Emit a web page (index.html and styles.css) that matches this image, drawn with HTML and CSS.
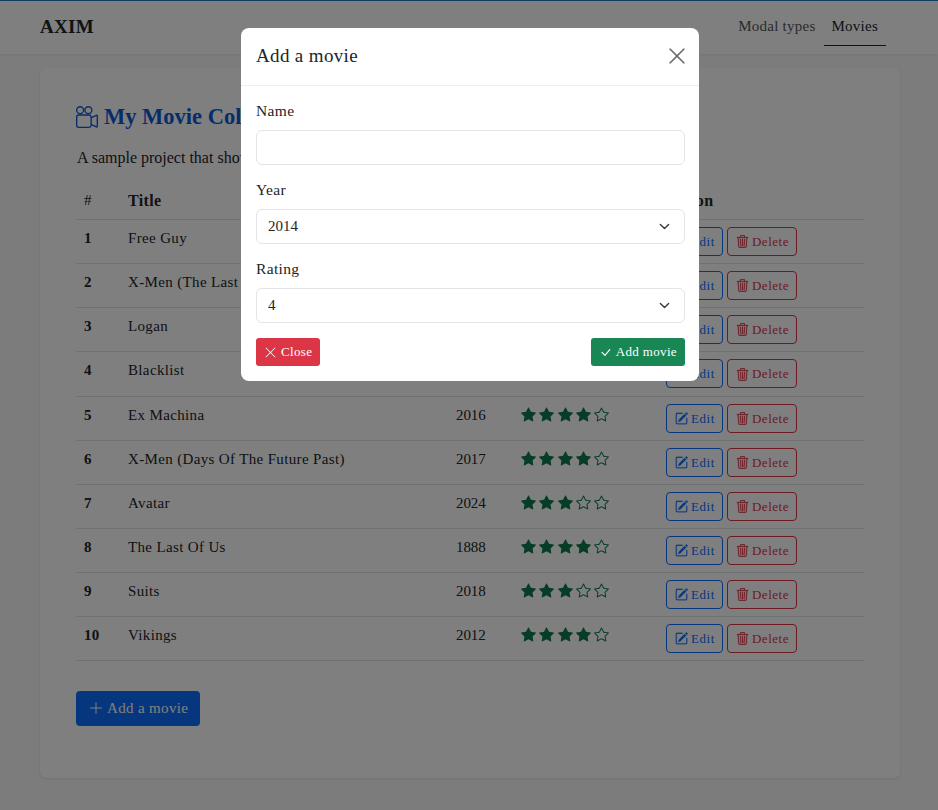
FILE: index.html
```html
<!DOCTYPE html>
<html lang="en">
<head>
    <meta charset="UTF-8">
    <meta name="viewport" content="width=device-width, initial-scale=1.0">
    <title>AXIM</title>
    <link rel="stylesheet" href="styles.css">
</head>
<body>
    <svg class="icon-defs" xmlns="http://www.w3.org/2000/svg">
        <symbol id="i-reels" viewBox="0 0 16 16"><path d="M6 3a3 3 0 1 1-6 0 3 3 0 0 1 6 0zM1 3a2 2 0 1 0 4 0 2 2 0 0 0-4 0z"/><path d="M9 6h.5a2 2 0 0 1 1.983 1.738l3.11-1.382A1 1 0 0 1 16 7.269v7.462a1 1 0 0 1-1.406.913l-3.111-1.382A2 2 0 0 1 9.5 16H2a2 2 0 0 1-2-2V8a2 2 0 0 1 2-2h7zm6 8.73V7.27l-3.5 1.555v4.35l3.5 1.556zM1 8v6a1 1 0 0 0 1 1h7.5a1 1 0 0 0 1-1V8a1 1 0 0 0-1-1H2a1 1 0 0 0-1 1z"/><path d="M9 6a3 3 0 1 0 0-6 3 3 0 0 0 0 6zM7 3a2 2 0 1 1 4 0 2 2 0 0 1-4 0z"/></symbol>
        <symbol id="i-edit" viewBox="0 0 16 16"><path d="M15.502 1.94a.5.5 0 0 1 0 .706L14.459 3.69l-2-2L13.502.646a.5.5 0 0 1 .707 0l1.293 1.293zm-1.75 2.456-2-2L4.939 9.21a.5.5 0 0 0-.121.196l-.805 2.414a.25.25 0 0 0 .316.316l2.414-.805a.5.5 0 0 0 .196-.12l6.813-6.814z"/><path fill-rule="evenodd" d="M1 13.5A1.5 1.5 0 0 0 2.5 15h11a1.5 1.5 0 0 0 1.5-1.5v-6a.5.5 0 0 0-1 0v6a.5.5 0 0 1-.5.5h-11a.5.5 0 0 1-.5-.5v-11a.5.5 0 0 1 .5-.5H9a.5.5 0 0 0 0-1H2.5A1.5 1.5 0 0 0 1 2.5v11z"/></symbol>
        <symbol id="i-trash" viewBox="0 0 16 16"><path d="M6.5 1h3a.5.5 0 0 1 .5.5v1H6v-1a.5.5 0 0 1 .5-.5ZM11 2.5v-1A1.5 1.5 0 0 0 9.5 0h-3A1.5 1.5 0 0 0 5 1.5v1H2.506a.58.58 0 0 0-.01 0H1.5a.5.5 0 0 0 0 1h.538l.853 10.66A2 2 0 0 0 4.885 16h6.23a2 2 0 0 0 1.994-1.84l.853-10.66h.538a.5.5 0 0 0 0-1h-.995a.59.59 0 0 0-.01 0H11Zm1.958 1-.846 10.58a1 1 0 0 1-.997.92h-6.23a1 1 0 0 1-.997-.92L3.042 3.5h9.916Zm-7.487 1a.5.5 0 0 1 .528.47l.5 8.5a.5.5 0 0 1-.998.06L5 5.03a.5.5 0 0 1 .47-.53Zm5.058 0a.5.5 0 0 1 .47.53l-.5 8.5a.5.5 0 1 1-.998-.06l.5-8.5a.5.5 0 0 1 .528-.47ZM8 4.5a.5.5 0 0 1 .5.5v8.5a.5.5 0 0 1-1 0V5a.5.5 0 0 1 .5-.5Z"/></symbol>
        <symbol id="i-star-fill" viewBox="0 0 16 16"><path d="M3.612 15.443c-.386.198-.824-.149-.746-.592l.83-4.73L.173 6.765c-.329-.314-.158-.888.283-.95l4.898-.696L7.538.792c.197-.39.73-.39.927 0l2.184 4.327 4.898.696c.441.062.612.636.282.95l-3.522 3.356.83 4.73c.078.443-.36.79-.746.592L8 13.187l-4.389 2.256z"/></symbol>
        <symbol id="i-star" viewBox="0 0 16 16"><path d="M2.866 14.85c-.078.444.36.791.746.593l4.39-2.256 4.389 2.256c.386.198.824-.149.746-.592l-.83-4.73 3.522-3.356c.33-.314.16-.888-.282-.95l-4.898-.696L8.465.792a.513.513 0 0 0-.927 0L5.354 5.12l-4.898.696c-.441.062-.612.636-.283.95l3.523 3.356-.83 4.73zm4.905-2.767-3.686 1.894.694-3.957a.565.565 0 0 0-.163-.505L1.71 6.745l4.052-.576a.525.525 0 0 0 .393-.288L8 2.223l1.847 3.658a.525.525 0 0 0 .393.288l4.052.575-2.906 2.77a.565.565 0 0 0-.163.506l.694 3.957-3.686-1.894a.503.503 0 0 0-.461 0z"/></symbol>
        <symbol id="i-x" viewBox="0 0 16 16"><path d="M2.146 2.854a.5.5 0 1 1 .708-.708L8 7.293l5.146-5.147a.5.5 0 0 1 .708.708L8.707 8l5.147 5.146a.5.5 0 0 1-.708.708L8 8.707l-5.146 5.147a.5.5 0 0 1-.708-.708L7.293 8 2.146 2.854Z"/></symbol>
        <symbol id="i-check" viewBox="0 0 16 16"><path d="M12.736 3.97a.733.733 0 0 1 1.047 0c.286.289.29.756.01 1.05L7.88 12.01a.733.733 0 0 1-1.065.02L3.217 8.384a.757.757 0 0 1 0-1.06.733.733 0 0 1 1.047 0l3.052 3.093 5.4-6.425a.247.247 0 0 1 .02-.022Z"/></symbol>
        <symbol id="i-plus" viewBox="0 0 16 16"><path d="M8 2a.5.5 0 0 1 .5.5v5h5a.5.5 0 0 1 0 1h-5v5a.5.5 0 0 1-1 0v-5h-5a.5.5 0 0 1 0-1h5v-5A.5.5 0 0 1 8 2Z"/></symbol>
    </svg>

    <nav class="navbar">
        <a class="brand" href="#">AXIM</a>
        <div class="nav-links">
            <a class="nav-link" href="#">Modal types</a>
            <a class="nav-link active" href="#">Movies</a>
        </div>
    </nav>

    <main class="card">
        <h1 class="page-title"><svg class="title-icon"><use href="#i-reels"/></svg>My Movie Collection</h1>
        <p class="lead">A sample project that shows how to use modals in a page.</p>

        <table class="movies">
            <thead>
                <tr><th class="col-num">#</th><th class="col-title">Title</th><th class="col-year">Year</th><th class="col-rating">Rating</th><th class="col-action">Action</th></tr>
            </thead>
            <tbody>
                <tr><td class="num">1</td><td>Free Guy</td><td class="year">2021</td><td><span class="stars"><svg><use href="#i-star-fill"/></svg><svg><use href="#i-star-fill"/></svg><svg><use href="#i-star-fill"/></svg><svg><use href="#i-star-fill"/></svg><svg><use href="#i-star"/></svg></span></td><td class="actions"><a class="btn-line edit" href="#"><svg><use href="#i-edit"/></svg>Edit</a><a class="btn-line delete" href="#"><svg><use href="#i-trash"/></svg>Delete</a></td></tr>
                <tr><td class="num">2</td><td>X-Men (The Last Stand)</td><td class="year">2006</td><td><span class="stars"><svg><use href="#i-star-fill"/></svg><svg><use href="#i-star-fill"/></svg><svg><use href="#i-star-fill"/></svg><svg><use href="#i-star"/></svg><svg><use href="#i-star"/></svg></span></td><td class="actions"><a class="btn-line edit" href="#"><svg><use href="#i-edit"/></svg>Edit</a><a class="btn-line delete" href="#"><svg><use href="#i-trash"/></svg>Delete</a></td></tr>
                <tr><td class="num">3</td><td>Logan</td><td class="year">2017</td><td><span class="stars"><svg><use href="#i-star-fill"/></svg><svg><use href="#i-star-fill"/></svg><svg><use href="#i-star-fill"/></svg><svg><use href="#i-star-fill"/></svg><svg><use href="#i-star"/></svg></span></td><td class="actions"><a class="btn-line edit" href="#"><svg><use href="#i-edit"/></svg>Edit</a><a class="btn-line delete" href="#"><svg><use href="#i-trash"/></svg>Delete</a></td></tr>
                <tr><td class="num">4</td><td>Blacklist</td><td class="year">2013</td><td><span class="stars"><svg><use href="#i-star-fill"/></svg><svg><use href="#i-star-fill"/></svg><svg><use href="#i-star-fill"/></svg><svg><use href="#i-star-fill"/></svg><svg><use href="#i-star"/></svg></span></td><td class="actions"><a class="btn-line edit" href="#"><svg><use href="#i-edit"/></svg>Edit</a><a class="btn-line delete" href="#"><svg><use href="#i-trash"/></svg>Delete</a></td></tr>
                <tr><td class="num">5</td><td>Ex Machina</td><td class="year">2016</td><td><span class="stars"><svg><use href="#i-star-fill"/></svg><svg><use href="#i-star-fill"/></svg><svg><use href="#i-star-fill"/></svg><svg><use href="#i-star-fill"/></svg><svg><use href="#i-star"/></svg></span></td><td class="actions"><a class="btn-line edit" href="#"><svg><use href="#i-edit"/></svg>Edit</a><a class="btn-line delete" href="#"><svg><use href="#i-trash"/></svg>Delete</a></td></tr>
                <tr><td class="num">6</td><td>X-Men (Days Of The Future Past)</td><td class="year">2017</td><td><span class="stars"><svg><use href="#i-star-fill"/></svg><svg><use href="#i-star-fill"/></svg><svg><use href="#i-star-fill"/></svg><svg><use href="#i-star-fill"/></svg><svg><use href="#i-star"/></svg></span></td><td class="actions"><a class="btn-line edit" href="#"><svg><use href="#i-edit"/></svg>Edit</a><a class="btn-line delete" href="#"><svg><use href="#i-trash"/></svg>Delete</a></td></tr>
                <tr><td class="num">7</td><td>Avatar</td><td class="year">2024</td><td><span class="stars"><svg><use href="#i-star-fill"/></svg><svg><use href="#i-star-fill"/></svg><svg><use href="#i-star-fill"/></svg><svg><use href="#i-star"/></svg><svg><use href="#i-star"/></svg></span></td><td class="actions"><a class="btn-line edit" href="#"><svg><use href="#i-edit"/></svg>Edit</a><a class="btn-line delete" href="#"><svg><use href="#i-trash"/></svg>Delete</a></td></tr>
                <tr><td class="num">8</td><td>The Last Of Us</td><td class="year">1888</td><td><span class="stars"><svg><use href="#i-star-fill"/></svg><svg><use href="#i-star-fill"/></svg><svg><use href="#i-star-fill"/></svg><svg><use href="#i-star-fill"/></svg><svg><use href="#i-star"/></svg></span></td><td class="actions"><a class="btn-line edit" href="#"><svg><use href="#i-edit"/></svg>Edit</a><a class="btn-line delete" href="#"><svg><use href="#i-trash"/></svg>Delete</a></td></tr>
                <tr><td class="num">9</td><td>Suits</td><td class="year">2018</td><td><span class="stars"><svg><use href="#i-star-fill"/></svg><svg><use href="#i-star-fill"/></svg><svg><use href="#i-star-fill"/></svg><svg><use href="#i-star"/></svg><svg><use href="#i-star"/></svg></span></td><td class="actions"><a class="btn-line edit" href="#"><svg><use href="#i-edit"/></svg>Edit</a><a class="btn-line delete" href="#"><svg><use href="#i-trash"/></svg>Delete</a></td></tr>
                <tr><td class="num">10</td><td>Vikings</td><td class="year">2012</td><td><span class="stars"><svg><use href="#i-star-fill"/></svg><svg><use href="#i-star-fill"/></svg><svg><use href="#i-star-fill"/></svg><svg><use href="#i-star-fill"/></svg><svg><use href="#i-star"/></svg></span></td><td class="actions"><a class="btn-line edit" href="#"><svg><use href="#i-edit"/></svg>Edit</a><a class="btn-line delete" href="#"><svg><use href="#i-trash"/></svg>Delete</a></td></tr>
            </tbody>
        </table>

        <a class="btn-add" href="#"><svg><use href="#i-plus"/></svg>Add a movie</a>
    </main>

    <div class="backdrop">
        <div class="modal">
            <div class="modal-header">
                <h2 class="modal-title">Add a movie</h2>
                <svg class="modal-close"><use href="#i-x"/></svg>
            </div>
            <form class="modal-body">
                <label class="field-label" for="name">Name</label>
                <input class="field" type="text" id="name" name="name">
                <label class="field-label" for="year">Year</label>
                <select class="field select" id="year" name="year"><option>2014</option></select>
                <label class="field-label" for="rating">Rating</label>
                <select class="field select" id="rating" name="rating"><option>4</option></select>
                <div class="modal-actions">
                    <button class="btn btn-close" type="button"><svg><use href="#i-x"/></svg>Close</button>
                    <button class="btn btn-save" type="submit"><svg><use href="#i-check"/></svg>Add movie</button>
                </div>
            </form>
        </div>
    </div>
</body>
</html>
```
FILE: styles.css
```css
* {
    box-sizing: border-box;
}
html, body {
    height: 810px;
    overflow: hidden;
}
body {
    margin: 0;
    background-color: #f8f9fa;
    color: #212529;
    font-family: "Liberation Serif", serif;
    font-size: 16px;
    letter-spacing: 0.35px;
}
a {
    text-decoration: none;
}
.icon-defs {
    display: none;
}

/* navbar */
.navbar {
    display: flex;
    justify-content: space-between;
    align-items: flex-start;
    height: 54px;
    padding: 0 52px 0 40px;
    background-color: #fff;
    border-top: 1px solid #1a7fbf;
    box-shadow: 0 1px 3px rgba(0, 0, 0, 0.08);
}
.brand {
    margin-top: 15px;
    color: #212529;
    font-size: 19px;
    font-weight: bold;
    letter-spacing: 0.3px;
}
.nav-links {
    display: flex;
}
.nav-link {
    height: 45px;
    padding: 17px 8px 0;
    color: #555;
    font-size: 15px;
    letter-spacing: 0.25px;
}
.nav-link.active {
    color: #212529;
    border-bottom: 1px solid #212529;
}

/* main card */
.card {
    height: 710px;
    margin: 14px 38px 0 40px;
    padding: 35px 36px 0;
    background-color: #fff;
    border-radius: 6px;
    box-shadow: 0 1px 3px rgba(0, 0, 0, 0.1);
}
.page-title {
    display: flex;
    align-items: center;
    margin: 0;
    height: 28px;
    color: #0d5bd7;
    font-size: 22.5px;
    font-weight: bold;
    letter-spacing: 0;
}
.title-icon {
    width: 22px;
    height: 22px;
    margin-right: 6px;
    fill: currentColor;
}
.lead {
    margin: 15px 0 0 1px;
    line-height: 24px;
    letter-spacing: 0;
}

/* table */
.movies {
    width: 788px;
    margin-top: 11px;
    border-collapse: collapse;
    table-layout: fixed;
    font-size: 15px;
}
.movies th {
    height: 38px;
    padding: 2px 8px 0;
    font-size: 16px;
    text-align: left;
    border-bottom: 1px solid #dee2e6;
}
.movies td {
    height: 44px;
    padding: 0 8px 6px;
    border-bottom: 1px solid #dee2e6;
}
.movies tbody tr:nth-child(4) td {
    height: 45px;
}
.movies th.col-num {
    width: 44px;
    font-size: 15px;
    font-weight: normal;
}
.col-title {
    width: 328px;
}
.col-year {
    width: 65px;
}
.col-rating {
    width: 145px;
}
.movies td.num {
    font-weight: bold;
}
.movies td.year {
    letter-spacing: -0.1px;
}
.stars {
    display: flex;
    gap: 3.3px;
    margin-top: -2px;
}
.stars svg {
    width: 15px;
    height: 15px;
    fill: #0f7b4f;
}
.movies td.actions {
    padding-top: 0;
    padding-bottom: 0;
    white-space: nowrap;
}

/* buttons */
.btn-line {
    display: inline-flex;
    align-items: center;
    height: 29px;
    margin-right: 4px;
    padding: 1px 7px 0 8px;
    border: 1px solid;
    border-radius: 4px;
    font-size: 13px;
    letter-spacing: 0.55px;
}
.btn-line svg {
    width: 13px;
    height: 13px;
    margin-right: 3px;
    fill: currentColor;
    stroke: currentColor;
    stroke-width: 0.3;
}
.btn-line.edit {
    color: #0d6efd;
}
.btn-line.delete {
    color: #dc3545;
}
.btn-add {
    display: inline-flex;
    align-items: center;
    height: 35px;
    margin-top: 30px;
    padding: 0 12px;
    background-color: #0d6efd;
    color: #fff;
    border-radius: 4px;
    font-size: 15px;
}
.btn-add svg {
    width: 16px;
    height: 16px;
    margin-right: 3px;
    fill: currentColor;
}

/* modal */
.backdrop {
    position: fixed;
    top: 0;
    left: 0;
    width: 100%;
    height: 100%;
    display: flex;
    justify-content: center;
    align-items: flex-start;
    padding: 28px 0 0 2px;
    background-color: rgba(0, 0, 0, 0.5);
}
.modal {
    width: 458px;
    background-color: #fff;
    border-radius: 8px;
}
.modal-header {
    display: flex;
    justify-content: space-between;
    align-items: center;
    height: 58px;
    padding: 0 12px 2px 15px;
    border-bottom: 1px solid #eee;
}
.modal-title {
    margin: 0;
    font-size: 19px;
    font-weight: normal;
}
.modal-close {
    width: 20px;
    height: 20px;
    fill: #6e6e6e;
    stroke: #6e6e6e;
    stroke-width: 0.4;
}
.modal-body {
    display: flex;
    flex-direction: column;
    padding: 15px 14px 15px 15px;
}
.field-label {
    height: 19px;
    line-height: 19px;
    margin-bottom: 10px;
    font-size: 15.5px;
}
.field {
    width: 100%;
    height: 35px;
    margin-bottom: 15px;
    padding: 0 11px;
    border: 1px solid #e3e4e8;
    border-radius: 6px;
    background-color: #fff;
    color: #212529;
    font-family: inherit;
    font-size: 15px;
    letter-spacing: 0;
}
.select {
    padding-bottom: 2px;
    appearance: none;
    background-image: url("data:image/svg+xml,%3csvg xmlns='http://www.w3.org/2000/svg' viewBox='0 0 16 16'%3e%3cpath fill='none' stroke='%23343a40' stroke-linecap='round' stroke-linejoin='round' stroke-width='2' d='m2 5 6 6 6-6'/%3e%3c/svg%3e");
    background-repeat: no-repeat;
    background-position: right 13px center;
    background-size: 13px 11px;
}
.modal-actions {
    display: flex;
    justify-content: space-between;
}
.btn {
    display: inline-flex;
    align-items: center;
    height: 28px;
    padding: 0 8px;
    border: none;
    border-radius: 3px;
    color: #fff;
    font-family: inherit;
    font-size: 13px;
    letter-spacing: 0.35px;
}
.btn svg {
    width: 13px;
    height: 13px;
    margin-right: 4px;
    fill: currentColor;
}
.btn-close {
    background-color: #dc3545;
}
.btn-save {
    background-color: #198754;
}
```
